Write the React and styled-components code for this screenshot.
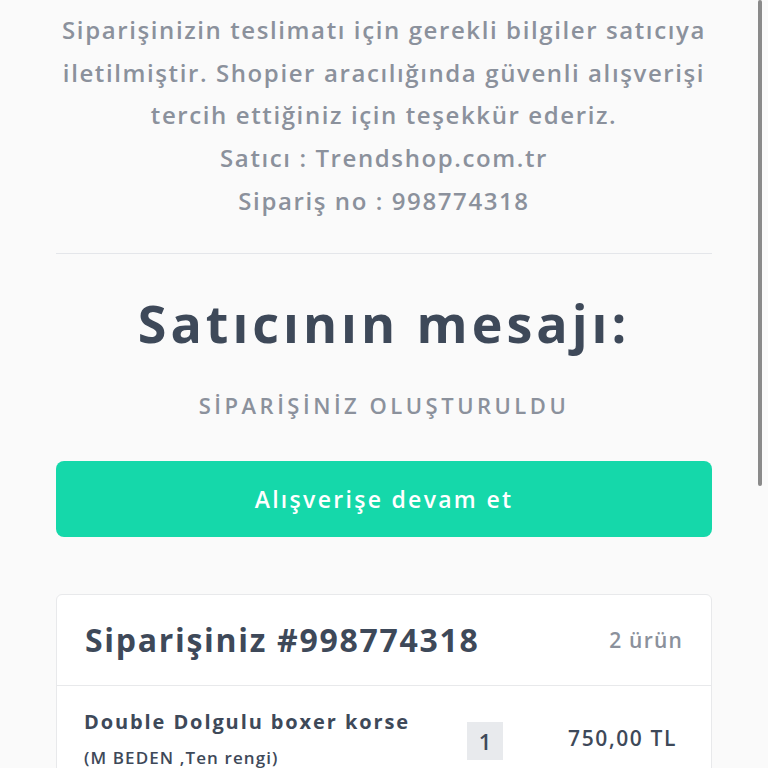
import React from "react";
import styled, { createGlobalStyle } from "styled-components";

const GlobalStyle = createGlobalStyle`
    html, body {
        margin: 0;
        padding: 0;
        background: #fafafa;
        overflow: hidden;
        font-family: "Open Sans", "Liberation Sans", sans-serif;
    }
`;

const Page = styled.div`
    width: 656px;
    margin: 0 auto;
    padding-top: 9px;
`;

const Intro = styled.p`
    margin: 0;
    text-align: center;
    font-size: 24px;
    line-height: 42.7px;
    font-weight: 600;
    letter-spacing: 1.6px;
    color: #8b919c;
`;

const Divider = styled.hr`
    border: 0;
    border-top: 1px solid #e4e6ea;
    margin: 30px 0 0;
`;

const Title = styled.h1`
    margin: 39px 0 0;
    text-align: center;
    font-size: 52px;
    line-height: 60px;
    font-weight: 700;
    letter-spacing: 4px;
    color: #3e4959;
`;

const Message = styled.p`
    margin: 37px 0 0;
    text-align: center;
    font-size: 22px;
    line-height: 30px;
    font-weight: 600;
    letter-spacing: 3.5px;
    color: #8b919c;
`;

const Button = styled.button`
    display: block;
    width: 100%;
    height: 76px;
    margin-top: 41px;
    border: 0;
    border-radius: 8px;
    background: #15d8aa;
    color: #fff;
    font-family: inherit;
    font-size: 23px;
    font-weight: 600;
    letter-spacing: 2.3px;
`;

const Card = styled.div`
    margin-top: 57px;
    background: #fff;
    border: 1px solid #e8e9eb;
    border-radius: 6px;
`;

const CardHeader = styled.div`
    height: 90px;
    padding: 0 28px;
    display: flex;
    align-items: center;
    justify-content: space-between;
    border-bottom: 1px solid #e8e9eb;
`;

const OrderTitle = styled.h2`
    margin: 0;
    font-size: 32px;
    font-weight: 700;
    letter-spacing: 1.7px;
    color: #3e4959;
`;

const Count = styled.span`
    font-size: 21px;
    font-weight: 600;
    letter-spacing: 1.2px;
    color: #8b919c;
`;

const Item = styled.div`
    display: grid;
    grid-template-columns: 1fr 100px 110px;
    align-items: start;
    padding: 22px 34px 40px 27px;
`;

const ItemName = styled.div`
    font-size: 20px;
    font-weight: 700;
    letter-spacing: 1.9px;
    color: #3e4959;
    line-height: 28px;
`;

const Variant = styled.div`
    margin-top: 10px;
    font-size: 17px;
    font-weight: 600;
    letter-spacing: 1.1px;
    color: #3e4959;
`;

const Qty = styled.span`
    justify-self: start;
    margin-top: 14px;
    width: 36px;
    height: 38px;
    display: flex;
    align-items: center;
    justify-content: center;
    background: #e8eaed;
    font-size: 22px;
    font-weight: 600;
    color: #3e4959;
`;

const Price = styled.span`
    justify-self: end;
    margin-top: 16px;
    font-size: 21px;
    font-weight: 600;
    letter-spacing: 1.6px;
    color: #3e4959;
`;

const Scrollbar = styled.div`
    position: fixed;
    top: 0;
    right: 6px;
    width: 4px;
    height: 486px;
    border-radius: 2px;
    background: #8a8a8a;
`;

export default function App() {
    return (
        <>
            <GlobalStyle />
            <Page>
                <Intro>
                    Siparişinizin teslimatı için gerekli bilgiler satıcıya
                    <br />
                    iletilmiştir. Shopier aracılığında güvenli alışverişi
                    <br />
                    tercih ettiğiniz için teşekkür ederiz.
                    <br />
                    Satıcı : Trendshop.com.tr
                    <br />
                    Sipariş no : 998774318
                </Intro>
                <Divider />
                <Title>Satıcının mesajı:</Title>
                <Message>SİPARİŞİNİZ OLUŞTURULDU</Message>
                <Button>Alışverişe devam et</Button>
                <Card>
                    <CardHeader>
                        <OrderTitle>Siparişiniz #998774318</OrderTitle>
                        <Count>2 ürün</Count>
                    </CardHeader>
                    <Item>
                        <div>
                            <ItemName>Double Dolgulu boxer korse</ItemName>
                            <Variant>(M BEDEN ,Ten rengi)</Variant>
                        </div>
                        <Qty>1</Qty>
                        <Price>750,00 TL</Price>
                    </Item>
                </Card>
            </Page>
            <Scrollbar />
        </>
    );
}
